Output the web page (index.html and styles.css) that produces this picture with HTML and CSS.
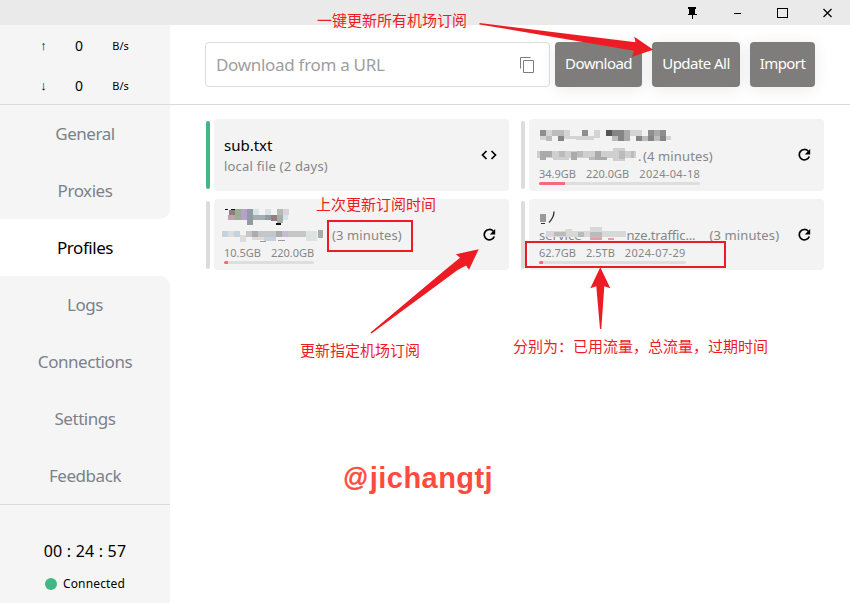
FILE: index.html
```html
<!DOCTYPE html>
<html lang="en">
<head>
<meta charset="utf-8">
<title>Profiles</title>
<link rel="stylesheet" href="styles.css">
</head>
<body>
<div class="window">
  <header class="titlebar">
    <svg class="winbtn" viewBox="0 0 45 25"><path d="M18 7h8v2h-1v5h2v1h-4v4h-1v-4h-4v-1h1V9h-1z"/></svg>
    <svg class="winbtn" viewBox="0 0 45 25"><path d="M19 13h7v1h-7z"/></svg>
    <svg class="winbtn" viewBox="0 0 45 25"><rect x="17.5" y="8.500" width="10" height="9" fill="none" stroke="#000"/></svg>
    <svg class="winbtn" viewBox="0 0 45 25"><path d="M18.500 9l8 8m0-8l-8 8" stroke="#000" stroke-width="1.200"/></svg>
  </header>
  <div class="body">
    <aside class="sidebar">
      <div class="traffic">
        <div class="rate"><span class="arrow">↑</span><span class="num">0</span><span class="unit">B/s</span></div>
        <div class="rate"><span class="arrow">↓</span><span class="num">0</span><span class="unit">B/s</span></div>
      </div>
      <nav class="nav">
        <a class="item">General</a>
        <a class="item before">Proxies</a>
        <a class="item active">Profiles</a>
        <a class="item after">Logs</a>
        <a class="item">Connections</a>
        <a class="item">Settings</a>
        <a class="item">Feedback</a>
      </nav>
      <div class="status">
        <div class="clock">00 : 24 : 57</div>
        <div class="conn"><i class="dot"></i><span>Connected</span></div>
      </div>
    </aside>
    <main class="main">
      <div class="toolbar">
        <div class="url"><span class="placeholder">Download from a URL</span>
          <svg class="copy" viewBox="0 0 16 18"><path d="M1.500 12.500V1.500h10M4.500 4.500h10v12h-10z"/></svg>
        </div>
        <button class="btn download">Download</button>
        <button class="btn update">Update All</button>
        <button class="btn import">Import</button>
      </div>
      <div class="profiles">
        <div class="profile">
          <i class="mark on"></i>
          <div class="card">
            <div class="info"><div class="name">sub.txt</div><div class="sub local">local file (2 days)</div></div>
            <svg class="act" viewBox="0 0 18 18"><path d="M6.500 5L2.500 9l4 4M11.500 5l4 4-4 4" fill="none" stroke="#000" stroke-width="1.700"/></svg>
          </div>
        </div>
        <div class="profile">
          <i class="mark"></i>
          <div class="card">
            <div class="info usageinfo">
              <div class="masked">
                <svg class="mosaic" viewBox="0 0 134 20"><path fill="#8e8e8e" d="M1 2h6v6H1zM43 2h6v6h-6zM109 2h6v6h-6zM121 2h6v6h-6z"/><path fill="#d4d4d4" d="M7 2h6v6H7zM25 2h6v6h-6zM37 8h18v4H37zM55 2h6v8h-6zM1 8h12v4H1zM91 2h12v6H91zM25 8h12v3H25zM127 8h5v4h-5z"/><path fill="#bcbcbc" d="M13 2h12v6H13zM7 8h6v5H7zM73 8h6v5h-6zM103 8h6v5h-6zM115 8h6v5h-6z"/><path fill="#555" d="M67 2h6v6h-6z"/><path fill="#858585" d="M73 2h12v6H73zM19 8h6v5h-6zM79 8h6v5h-6zM97 8h6v5h-6zM109 8h6v5h-6zM121 8h6v5h-6z"/><path fill="#aaa" d="M85 2h6v6h-6zM85 8h6v5h-6zM115 2h6v6h-6z"/></svg>
              </div>
              <div class="sub">
                <svg class="mosaic hostmask" viewBox="0 0 101 15"><path fill="#cfcfcf" d="M0 3h99v7H0zM16 10h16v2H16zM76 0h12v13H76z"/><path fill="#aaa" d="M3 3h6v9H3zM9 3h6v6H9zM34 4h6v8h-6zM58 3h6v9h-6zM64 9h6v3h-6z"/><path fill="#bbb" d="M22 3h6v6h-6zM40 3h6v6h-6zM52 9h6v3h-6zM82 3h6v8h-6zM94 3h3v7h-3z"/></svg>
                <span class="colon">.</span><span class="time">(4 minutes)</span>
              </div>
              <div class="usage"><div class="stats"><span>34.9GB</span><span>220.0GB</span><span class="date">2024-04-18</span></div><div class="bar"><i style="width:16%"></i></div></div>
            </div>
            <svg class="act" viewBox="0 0 18 18"><path d="M13.300 5.200A5.200 5.200 0 1 0 14.300 10.500" fill="none" stroke="#000" stroke-width="1.700"/><path d="M15.200 3v5.400H9.800z"/></svg>
          </div>
        </div>
        <div class="profile">
          <i class="mark"></i>
          <div class="card">
            <div class="info usageinfo">
              <div class="masked">
                <svg class="mosaic" viewBox="0 0 134 20"><path fill="#111" d="M1 2h3v1H1zM7 2h5v1H7zM52 16h5v2h-5z"/><path fill="#8f7d80" d="M5 3h6v5H5zM47 8h6v6h-6z"/><path fill="#9cae92" d="M11 2h6v6h-6zM11 8h6v5h-6z"/><path fill="#bfa1b0" d="M4 8h7v5H4z"/><path fill="#b8a0cc" d="M17 2h6v11h-6z"/><path fill="#909ba2" d="M23 2h6v16h-6zM41 8h6v5h-6z"/><path fill="#d7e3e6" d="M29 2h6v6h-6zM41 2h6v6h-6zM59 8h5v5h-5z"/><path fill="#a7adad" d="M29 8h12v5H29zM53 8h6v8h-6z"/><path fill="#b7bab5" d="M53 2h6v6h-6z"/><path fill="#ddd2d9" d="M59 2h6v6h-6z"/></svg>
              </div>
              <div class="sub">
                <svg class="mosaic hostmask" viewBox="0 0 101 15"><path fill="#c5d3df" d="M0 3h6v6H0zM12 3h6v6h-6zM42 5h12v8H42z"/><path fill="#dedcda" d="M6 3h6v6H6zM18 7h6v7h-6zM30 9h12v3H30z"/><path fill="#c5c6c8" d="M24 3h66v6H24z"/><path fill="#ababad" d="M30 3h6v6h-6zM54 3h6v6h-6zM96 2h5v8h-5z"/><path fill="#c2bdd0" d="M60 3h6v6h-6z"/><path fill="#dde3e1" d="M84 3h11v10H84z"/><path fill="#999" d="M38 13h6v1h-6zM56 12h7v1h-7z"/></svg>
                <span class="time boxed">(3 minutes)</span>
              </div>
              <div class="usage"><div class="stats"><span>10.5GB</span><span>220.0GB</span></div><div class="bar"><i style="width:4.800%"></i></div></div>
            </div>
            <svg class="act" viewBox="0 0 18 18"><path d="M13.300 5.200A5.200 5.200 0 1 0 14.300 10.500" fill="none" stroke="#000" stroke-width="1.700"/><path d="M15.200 3v5.400H9.800z"/></svg>
          </div>
        </div>
        <div class="profile">
          <i class="mark"></i>
          <div class="card">
            <div class="info usageinfo">
              <div class="masked">
                <svg class="mosaic" viewBox="0 0 134 20"><path fill="#999" d="M1 7h6v8H1z"/><path fill="#333" d="M2 16h4v1H2z"/><path d="M15 4.500c0 4-2 8-5 11" fill="none" stroke="#333" stroke-width="1.300"/></svg>
              </div>
              <div class="sub">
                <span class="service">service</span>
                <svg class="mosaic overmask" viewBox="0 0 86 16"><path fill="#d8d8d8" d="M6 4h80v6H6zM26 2h6v3h-6zM50 0h12v6H50z"/><path fill="#bbb" d="M14 5h12v4H14zM38 5h6v5h-6zM50 5h12v6H50z"/><path fill="#e0a0a0" d="M50 11h12v2H50zM68 11h6v2h-6z"/></svg>
                <span class="host">nze.traffic...</span><span class="time last">(3 minutes)</span>
              </div>
              <div class="usage"><div class="stats"><span>62.7GB</span><span>2.5TB</span><span class="date">2024-07-29</span></div><div class="bar"><i style="width:2.700%"></i></div></div>
            </div>
            <svg class="act" viewBox="0 0 18 18"><path d="M13.300 5.200A5.200 5.200 0 1 0 14.300 10.500" fill="none" stroke="#000" stroke-width="1.700"/><path d="M15.200 3v5.400H9.800z"/></svg>
          </div>
        </div>
      </div>
    </main>
  </div>
  <svg class="marks" viewBox="0 0 850 603">
    <path d="M479.500 23l156 19.300-1.200-5.600 19 13-21.300 7 2-6-154.500-26.300zM370.500 332.500L445 270l15-12.300-4-3.400 22.700-5-9.700 20.400-3-4.200-8.300 4.500-86.200 63.600zM600.300 267.300l10 21-6-2-3 42.700H600l-3.700-42.700-6 2z"/>
    <path d="M328 221h84v30h-84zM526 242h199v25H526z" fill="none" stroke="#ed1c24" stroke-width="2"/>
  </svg>
  <div class="note n1">一键更新所有机场订阅</div>
  <div class="note n2">上次更新订阅时间</div>
  <div class="note n3">更新指定机场订阅</div>
  <div class="note n4">分别为：已用流量，总流量，过期时间</div>
  <div class="watermark"><span class="at">@</span>jichangtj</div>
</div>
</body>
</html>
```
FILE: styles.css
```css
* { box-sizing: border-box; }
body { margin: 0; background: #fff; color: #000; font-family: "Noto Sans", "Open Sans", sans-serif; }
svg { display: block; flex: none; }
.window { position: relative; width: 850px; height: 603px; overflow: hidden; display: flex; flex-direction: column; }
.titlebar { height: 25px; background: #eaeaea; display: flex; justify-content: flex-end; flex: none; }
.winbtn { width: 45px; height: 25px; }
.body { display: flex; flex: 1; }
.sidebar { width: 170px; background: #fff; display: flex; flex-direction: column; }
.traffic { height: 80px; background: #f5f5f5; border-bottom: 1px solid #dadada; }
.rate { height: 40px; display: grid; grid-template-columns: 17px 54px 29px; align-items: center; padding-left: 35px; text-align: center; line-height: 40px; }
.arrow { font: 13px/40px "Liberation Sans", sans-serif; }
.num { font-size: 14px; }
.unit { font-size: 11px; padding-top: 1px; }
.nav { display: flex; flex-direction: column; background: #fff; }
.item { height: 57px; line-height: 57px; text-align: center; background: #f5f5f5; color: #7a828b; font-size: 17px; letter-spacing: -.45px; }
.item.before { border-bottom-right-radius: 10px; }
.item.after { border-top-right-radius: 10px; }
.item.active { background: #fff; color: #000; }
.status { flex: 1; background: #f5f5f5; border-top: 1px solid #dadada; padding-top: 34px; text-align: center; }
.clock { font-size: 16px; line-height: 24px; letter-spacing: .2px; }
.conn { display: flex; justify-content: center; align-items: center; gap: 6px; margin-top: 10px; font-size: 12px; line-height: 20px; letter-spacing: .15px; }
.conn span { padding-top: 1px; }
.dot { width: 12px; height: 12px; border-radius: 50%; background: #41b883; }
.main { flex: 1; display: flex; flex-direction: column; }
.toolbar { height: 80px; border-bottom: 1px solid #dadada; padding: 17px 35px 0; display: flex; }
.url { width: 345px; height: 45px; border: 1px solid #dcdcdc; border-radius: 4px; padding: 0 14px 0 10px; display: flex; align-items: center; justify-content: space-between; margin-right: 5px; }
.placeholder { color: #9e9e9e; font-size: 17px; letter-spacing: -.3px; }
.copy { width: 16px; height: 18px; fill: none; stroke: #807c7c; }
.btn { height: 45px; padding: 0 0 3px; border: 0; border-radius: 4px; background: #7f7d7b; color: #fff; font: 15px "Noto Sans", sans-serif; letter-spacing: -.55px; box-shadow: 0 2px 16px rgba(0,0,0,.09); }
.download { width: 87px; margin-right: 10px; }
.update { width: 88px; margin-right: 10px; }
.import { width: 65px; }
.profiles { display: grid; grid-template-columns: 303px 303px; grid-template-rows: 72px 71px; gap: 8px 12px; padding: 14px 0 0 36px; }
.profile { display: flex; align-items: center; gap: 4px; }
.mark { width: 4px; height: 68px; border-radius: 2px; background: #dcdcdc; }
.mark.on { background: #41b883; }
.card { flex: 1; height: 100%; border-radius: 4px; background: #f3f3f3; padding: 0 11px 0 10px; display: flex; align-items: center; justify-content: space-between; }
.act { width: 18px; height: 18px; }
.name { font-size: 15px; line-height: 22px; }
.sub { display: flex; align-items: center; color: #868686; font-size: 13px; line-height: 20px; white-space: nowrap; }
.local { letter-spacing: .2px; }
.time { letter-spacing: .12px; }
.usageinfo { padding-bottom: 2px; }
.masked { height: 22px; padding-top: 4px; }
.masked + .sub { height: 20px; }
.mosaic { width: 134px; height: 20px; }
.hostmask { width: 101px; height: 15px; margin-left: -2px; }
.colon { width: 5px; }
.boxed { margin-left: 9px; }
.overmask { width: 86px; height: 16px; margin-left: -41px; position: relative; }
.host { letter-spacing: -.15px; }
.last { margin-left: 14px; }
.usage { width: max-content; }
.stats { display: flex; gap: 10px; font-size: 11px; line-height: 15px; color: #868686; }
.date { letter-spacing: .35px; }
.bar { height: 3px; margin-top: 1px; border-radius: 2px; background: #dedede; overflow: hidden; }
.bar i { display: block; height: 3px; background: #f56c78; }
.marks { position: absolute; inset: 0; width: 850px; height: 603px; fill: #ed1c24; }
.note { position: absolute; color: #ed1c24; font: 15px/22px "Noto Sans CJK SC", sans-serif; white-space: nowrap; }
.n1 { left: 317px; top: 9px; }
.n2 { left: 316px; top: 193px; }
.n3 { left: 300px; top: 339px; }
.n4 { left: 513px; top: 335px; }
.watermark { position: absolute; left: 343px; top: 461px; color: #ff4a3d; font: bold 29px/34px "Liberation Sans", sans-serif; letter-spacing: .45px; }
.at { font-size: 25px; font-weight: normal; -webkit-text-stroke: .6px #ff4a3d; margin-right: 1px; position: relative; top: -2px; }
```
